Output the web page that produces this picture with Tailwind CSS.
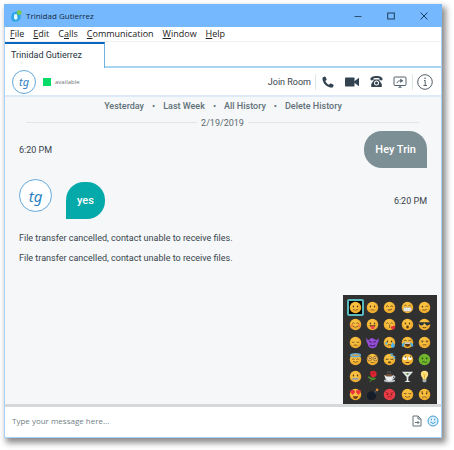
<!DOCTYPE html>
<html lang="en">
<head>
<meta charset="utf-8">
<meta name="viewport" content="width=device-width, initial-scale=1">
<title>Trinidad Gutierrez</title>
<script src="https://cdn.jsdelivr.net/npm/@tailwindcss/browser@4"></script>
</head>
<body class="flex min-h-screen bg-white pt-1 pr-3 pb-3 pl-1 font-[Roboto,sans-serif] text-[9px] leading-3 text-[#38444b]">

<svg class="hidden" aria-hidden="true">
  <defs>
    <symbol id="face" viewBox="0 0 14 14"><circle cx="7" cy="7" r="6.2" fill="#f0ae30"/><circle cx="6.5" cy="6" r="4.6" fill="#f8c040"/></symbol>
    <symbol id="eyes" viewBox="0 0 14 14"><ellipse cx="4.8" cy="5.9" rx=".8" ry="1" fill="#5b3a14"/><ellipse cx="9.2" cy="5.9" rx=".8" ry="1" fill="#5b3a14"/></symbol>
    <symbol id="smile" viewBox="0 0 14 14"><path d="M4.300 9Q7 11 9.700 9" fill="none" stroke="#6b461a" stroke-width=".8"/></symbol>
  </defs>
</svg>

<main class="flex min-w-0 flex-1 flex-col border border-[#a9d2fb] bg-white shadow-[3px_4px_6px_1px_rgba(0,0,0,0.45)]">
  <header class="-mx-px -mt-px flex h-[23px] items-center bg-[#75b8fd] pr-0.5 font-['Open_Sans',sans-serif] text-[8px] text-[#14283c]">
    <svg class="ml-1.5 size-3" viewBox="0 0 12 12" aria-hidden="true"><path d="M2 3.5L6 1.5L10.5 4V9L7 11.5H3L1 8.5Z" fill="#28a5e5"/><path d="M4.3 4.2H7L7.6 8.2L6 10L3.8 8.5Z" fill="#e5f7ff"/><circle cx="9.2" cy="2.6" r="2.4" fill="#7bc94c"/></svg>
    <h1 class="ml-1 flex-1">Trinidad Gutierrez</h1>
    <button class="flex h-full w-[33px] items-center justify-center" aria-label="Minimize"><svg class="size-2" viewBox="0 0 8 8"><path d="M.5 4.5H7.5" stroke="#2f506f"/></svg></button>
    <button class="flex h-full w-[33px] items-center justify-center" aria-label="Maximize"><svg class="size-2" viewBox="0 0 8 8"><rect x=".7" y="1" width="6.6" height="6" fill="none" stroke="#1f3c58"/></svg></button>
    <button class="flex h-full w-[33px] items-center justify-center" aria-label="Close"><svg class="size-2" viewBox="0 0 8 8"><path d="M.5.5L7.5 7.5M7.5.5L.5 7.5" stroke="#1f3c58"/></svg></button>
  </header>

  <nav class="flex h-[15px] items-center gap-[9px] border-b border-[#f0f0f0] pl-[5px] font-['Open_Sans',sans-serif] text-[9px] text-[#222]" aria-label="Menu">
    <button><u>F</u>ile</button>
    <button><u>E</u>dit</button>
    <button>C<u>a</u>lls</button>
    <button><u>C</u>ommunication</button>
    <button><u>W</u>indow</button>
    <button><u>H</u>elp</button>
  </nav>

  <div class="flex h-[26px]">
    <button class="w-[100px] border-t-2 border-r border-t-[#0a66be] border-r-[#71b1df] pb-0.5 pl-1.5 text-left text-[#26323a]">Trinidad Gutierrez</button>
    <div class="flex-1 border-b-2 border-[#a9d5f2]"></div>
  </div>

  <section class="flex h-[29px] items-center border-b-2 border-[#dcebf7] pr-1 pl-[7px]">
    <div class="flex size-6 items-center justify-center rounded-full border border-[#63a9da] font-['Noto_Sans',sans-serif] text-[11px] text-[#2d82c2] italic">tg</div>
    <span class="ml-[7px] size-2 bg-[#08dc68]"></span>
    <span class="ml-1 flex-1 font-['Open_Sans',sans-serif] text-[6px] text-[#6c757a]">available</span>
    <button class="mr-1">Join Room</button>
    <div class="flex h-4 items-center border-x border-[#dde7ea]">
      <button class="flex w-6 justify-center" aria-label="Call"><svg class="size-3" viewBox="0 0 24 24" fill="#33434f"><path d="M1 3.5L5 1C6 .6 6.7 1 7.2 2L9 6.2C9.4 7.2 9.2 7.8 8.4 8.5L6.5 10C8.2 13.5 10.7 16 14.2 17.7L15.8 15.6C16.5 14.8 17.1 14.6 18 15L22.2 16.9C23.1 17.3 23.4 18 23.2 18.8L22 22C21.7 22.8 21.1 23.2 20.2 23.2C9.5 22.8 1.2 14.3 .8 4.3Z"/></svg></button>
      <button class="flex w-6 justify-center" aria-label="Video call"><svg class="h-3 w-[14px]" viewBox="0 0 28 24" fill="#33434f"><rect y="3" width="19" height="18" rx="1.5"/><path d="M18 11L28 3.500V20.500L18 13Z"/></svg></button>
      <button class="flex w-6 justify-center" aria-label="Telephone"><svg class="size-[13px]" viewBox="0 0 26 26" fill="#33434f"><path d="M1 9C0 4.5 6 2 13 2S26 4.500 25 9L24 11L19 10V7C16 5.800 10 5.800 7 7V10L2 11Z"/><path d="M8.500 9H17.500L20 13L23.500 18V24H2.500V18L6 13Z"/><circle cx="13" cy="16" r="5" fill="#fff"/><circle cx="13" cy="16" r="3"/></svg></button>
      <button class="flex w-6 justify-center" aria-label="Share screen"><svg class="size-[14px]" viewBox="0 0 28 28" fill="none" stroke="#53636e" stroke-width="2"><rect x="2" y="4" width="24" height="17" rx="2"/><path d="M8 16C9 12.500 12 11.500 16 11.500"/><path d="M15 8L20 11.500L15 15ZM11 25H17L14 22Z" fill="#53636e" stroke-width="1"/></svg></button>
    </div>
    <button class="flex w-6 justify-center" aria-label="Information"><svg class="size-4" viewBox="0 0 16 16" fill="none" stroke="#53626b"><circle cx="8" cy="8" r="7.300"/><path d="M7 6.500H8.200V11.500M6.500 11.500H10"/><circle cx="8" cy="4.200" r=".8" fill="#53626b" stroke="none"/></svg></button>
  </section>

  <section class="relative flex-1 bg-[#f5f7f9] px-3.5">
    <div class="flex h-[17px] items-center justify-center gap-2 font-medium text-[#627178]">
      <button>Yesterday</button><span>•</span><button>Last Week</button><span>•</span><button>All History</button><span>•</span><button>Delete History</button>
    </div>
    <div class="flex h-[17px] items-center gap-1 pr-2 pl-[7px] text-[#5e6a70]">
      <hr class="flex-1 border-[#e3e6e9]"><time>2/19/2019</time><hr class="flex-1 border-[#e3e6e9]">
    </div>
    <div class="flex items-center justify-between">
      <time>6:20 PM</time>
      <p class="flex h-[37px] items-center rounded-[18px] rounded-br-none bg-[#7c8f94] px-[11px] text-[11px] font-medium text-white">Hey Trin</p>
    </div>
    <div class="mt-[11px] flex h-10">
      <div class="flex size-[33px] items-center justify-center rounded-full border border-[#63a9da] bg-white font-['Noto_Sans',sans-serif] text-[15px] text-[#2d82c2] italic">tg</div>
      <p class="ml-3.5 flex h-[37px] items-center self-end rounded-[18px] rounded-bl-none bg-[#03aaa9] px-[11px] text-[11px] font-medium text-white">yes</p>
      <time class="mt-1 ml-auto self-center">6:20 PM</time>
    </div>
    <p class="mt-[13px]">File transfer cancelled, contact unable to receive files.</p>
    <p class="mt-2">File transfer cancelled, contact unable to receive files.</p>

    <div class="absolute right-1 -bottom-px grid h-[110px] w-[94px] grid-cols-5 grid-rows-6 place-items-center bg-[#303030] px-1 pt-1 pb-0.5" aria-label="Emoji">
      <button class="flex size-[17px] items-center justify-center rounded-[2px] border-2 border-[#59b9bd] bg-black" aria-label="Smile"><svg class="size-[13px]" viewBox="0 0 14 14"><use href="#face"/><use href="#eyes"/><use href="#smile"/></svg></button>
      <button aria-label="Frown"><svg class="size-[13px]" viewBox="0 0 14 14"><use href="#face"/><use href="#eyes"/><path d="M4.800 9.800Q7 9 9.200 9.800" fill="none" stroke="#6b461a" stroke-width=".8"/></svg></button>
      <button aria-label="Smirk"><svg class="size-[13px]" viewBox="0 0 14 14"><use href="#face"/><path d="M3.500 6Q5 4.500 6 6M8 6Q9.500 4.500 10.500 6M5 9.500Q8 10.500 9.800 8.300" fill="none" stroke="#5b3a14"/></svg></button>
      <button aria-label="Grin"><svg class="size-[13px]" viewBox="0 0 14 14"><use href="#face"/><path d="M3.500 5.200Q5 4 6 5.200M8 5.200Q9.500 4 10.500 5.200" fill="none" stroke="#5b3a14" stroke-width=".8"/><rect x="2.600" y="7" width="8.800" height="4" rx="2" fill="#fff" stroke="#8b8b75" stroke-width=".5"/><path d="M3 9H11M5 7V11M7 7V11M9 7V11" stroke="#b9bbb9" stroke-width=".4"/></svg></button>
      <button aria-label="Wink"><svg class="size-[13px]" viewBox="0 0 14 14"><use href="#face"/><circle cx="4.800" cy="6" r=".9" fill="#5b3a14"/><path d="M8 6Q9.500 5 10.700 6M4.500 9.500Q7.500 10.500 9.500 8.800" fill="none" stroke="#5b3a14" stroke-width=".8"/></svg></button>

      <button aria-label="Blush"><svg class="size-[13px]" viewBox="0 0 14 14"><use href="#face"/><path d="M3.500 6Q5 4.500 6 6M8 6Q9.500 4.500 10.500 6" fill="none" stroke="#5b3a14" stroke-width=".8"/><circle cx="3.200" cy="8.300" r="1.500" fill="#f77b45"/><circle cx="10.800" cy="8.300" r="1.500" fill="#f77b45"/><use href="#smile"/></svg></button>
      <button aria-label="Tongue out"><svg class="size-[13px]" viewBox="0 0 14 14"><use href="#face"/><use href="#eyes"/><path d="M3.500 7.800H10.500Q10 10 7 10T3.500 7.800Z" fill="#5b3a14"/><path d="M5.300 8.500H9V11Q7.200 13.500 5.300 11Z" fill="#f14552"/></svg></button>
      <button aria-label="Kiss"><svg class="size-[13px]" viewBox="0 0 14 14"><use href="#face"/><path d="M3.500 6Q5 4.500 6 6M8 6Q9.500 4.500 10.500 6M6.500 7.500Q8.500 8 6.800 8.900Q8.500 9.500 6.500 10.500" fill="none" stroke="#5b3a14" stroke-width=".8"/><path d="M10.800 13L8.300 10.500Q8.300 8.700 10.300 9Q12.300 7.600 13.300 9.500Q13.500 11.500 10.800 13Z" fill="#e52e35"/></svg></button>
      <button aria-label="Surprised"><svg class="size-[13px]" viewBox="0 0 14 14"><use href="#face"/><use href="#eyes"/><ellipse cx="7" cy="9.600" rx="1.400" ry="1.600" fill="#5b3a14"/></svg></button>
      <button aria-label="Sunglasses"><svg class="size-[13px]" viewBox="0 0 14 14"><use href="#face"/><path d="M.8 4.500H13.200V6Q12 8.500 9.500 8Q8 7.600 7.600 5.800H6.400Q6 7.600 4.500 8Q2 8.500.8 6Z" fill="#26303c"/><path d="M5 10Q7 11 9 9.800" fill="none" stroke="#5b3a14"/></svg></button>

      <button aria-label="Pensive"><svg class="size-[13px]" viewBox="0 0 14 14"><use href="#face"/><path d="M3 6.500Q4.500 7.500 6 6.500M8 6.500Q9.500 7.500 11 6.500M5 10Q7 9.200 9 10" fill="none" stroke="#76501a" stroke-width=".9"/></svg></button>
      <button aria-label="Devil"><svg class="size-[13px]" viewBox="0 0 14 14"><path d="M.8 1Q.5 4 3 4.500Q5 2 7 2.300T11 4.500Q13.500 4 13.200 1Q14.500 6 12.300 8Q11.500 13 7 13.200Q2.500 13 1.700 8Q-.5 6 .8 1Z" fill="#944fd2"/><path d="M3.500 5.500L6 7M10.500 5.500L8 7M4 9.500Q7 12 10 9.500" fill="none" stroke="#411c6e" stroke-width="1.100"/></svg></button>
      <button aria-label="Crying"><svg class="size-[13px]" viewBox="0 0 14 14"><use href="#face"/><use href="#eyes"/><path d="M5 10Q7 8.500 9 10" fill="none" stroke="#5b3a14"/><path d="M10.500 6.500Q13.200 10 12.500 11.500Q10.500 14 8.800 11.500Q8.500 9.500 10.500 6.500Z" fill="#4ab6ec"/><ellipse cx="3.600" cy="8" rx="1" ry="1.500" fill="#4ab6ec"/></svg></button>
      <button aria-label="Tears of joy"><svg class="size-[13px]" viewBox="0 0 14 14"><use href="#face"/><path d="M3 5.200Q4.500 3.800 6 5.200M8 5.200Q9.500 3.800 11 5.200" fill="none" stroke="#5b3a14" stroke-width=".8"/><path d="M4 7H10Q10 11.500 7 11.500T4 7Z" fill="#5b3a14"/><path d="M4.300 7H9.700V8.300H4.300Z" fill="#fff"/><path d="M3.800 6.500Q4 11.500 1.500 11.500Q-1 9.500 3.800 6.500ZM10.200 6.500Q10 11.500 12.500 11.500Q15 9.500 10.200 6.500Z" fill="#43afe9"/></svg></button>
      <button aria-label="Unamused"><svg class="size-[13px]" viewBox="0 0 14 14"><use href="#face"/><path d="M3 5.500H6M8 5.500H11M5 9.500H9" stroke="#5b3a14" stroke-width=".8"/><path d="M4 6.300H5.500M9 6.300H10.500" stroke="#5b3a14"/></svg></button>

      <button aria-label="Angel"><svg class="size-[13px]" viewBox="0 0 14 14"><use href="#face"/><ellipse cx="7" cy="2.300" rx="5.300" ry="1.600" fill="#d6a044" stroke="#55aee8" stroke-width="1.400"/><path d="M3.500 7Q5 5.500 6 7M8 7Q9.500 5.500 10.500 7" fill="none" stroke="#5b3a14" stroke-width=".8"/><use href="#smile"/></svg></button>
      <button aria-label="Nerd"><svg class="size-[13px]" viewBox="0 0 14 14"><use href="#face"/><g fill="#edc068" stroke="#96702f" stroke-width=".9"><circle cx="4" cy="6" r="2.500"/><circle cx="10" cy="6" r="2.500"/></g><circle cx="4.200" cy="6" r=".8" fill="#5b3a14"/><circle cx="9.800" cy="6" r=".8" fill="#5b3a14"/><path d="M5 10.200H9" stroke="#8b6128" stroke-width=".9"/></svg></button>
      <button aria-label="Sleeping"><svg class="size-[13px]" viewBox="0 0 14 14"><use href="#face"/><path d="M3 6.500Q4.500 7.500 6 6.500M8 6.500Q9.500 7.500 11 6.500" fill="none" stroke="#5b3a14"/><ellipse cx="7" cy="10" rx="1.800" ry="1.200" fill="#76501a"/><path d="M8 .8H10.500L8.500 3H11M11 3.800H13L11.300 5.800H13.300" fill="none" stroke="#4baeea"/></svg></button>
      <button aria-label="Eye roll"><svg class="size-[13px]" viewBox="0 0 14 14"><use href="#face"/><circle cx="4.300" cy="5.600" r="2" fill="#fff"/><circle cx="9.700" cy="5.600" r="2" fill="#fff"/><circle cx="4.700" cy="4.400" r=".8" fill="#5b3a14"/><circle cx="10.100" cy="4.400" r=".8" fill="#5b3a14"/><path d="M5 10.200H9" stroke="#5b3a14"/></svg></button>
      <button aria-label="Sick"><svg class="size-[13px]" viewBox="0 0 14 14"><circle cx="7" cy="7" r="6.200" fill="#70b52d"/><circle cx="4.700" cy="5.800" r=".9" fill="#31520e"/><circle cx="9.300" cy="5.800" r=".9" fill="#31520e"/><path d="M4.500 10Q6 8.500 7 9.700T9.500 9.500" fill="none" stroke="#31520e"/></svg></button>

      <button aria-label="Zipped mouth"><svg class="size-[13px]" viewBox="0 0 14 14"><use href="#face"/><use href="#eyes"/><path d="M3.500 9.500H10.500" stroke="#a6afb4" stroke-width="2"/><path d="M4 9.500H10" stroke="#5a6064" stroke-width=".7" stroke-dasharray="1 1"/></svg></button>
      <button aria-label="Rose"><svg class="size-[13px]" viewBox="0 0 14 14"><path d="M8 6Q7 10 4 13M6.300 10Q3 9.500 2.300 7.500Q5.500 7 6.500 9.500M6 10.500Q9 11 10.500 9Q8 8 6.500 10" fill="#4f8b2d" stroke="#4f8b2d" stroke-width="1"/><path d="M4.500 1.500L8 .8L11 2L11.500 5Q10.500 8 7.500 7.800Q4.300 7.500 4.500 1.500Z" fill="#e02430"/><path d="M6 3Q8 5 10 2.500" fill="none" stroke="#951625" stroke-width=".7"/></svg></button>
      <button aria-label="Coffee"><svg class="size-[13px]" viewBox="0 0 14 14"><ellipse cx="7" cy="11.500" rx="6" ry="1.600" fill="#b8bec1"/><path d="M1.500 5.500H11.500Q11.500 11.500 7 12Q2 11.500 1.500 5.500Z" fill="#edf0f2"/><ellipse cx="6.500" cy="5.600" rx="4.300" ry="1.300" fill="#77533b"/><path d="M11 6.500Q14 6.500 12.500 8.500L10.500 9.500" fill="none" stroke="#cfd5d8"/><path d="M5.500 3.500Q4.500 2.500 5.500 1.500M8 3.500Q7 2.500 8 1.500" fill="none" stroke="#8b9296" stroke-width=".7"/></svg></button>
      <button aria-label="Cocktail"><svg class="size-[13px]" viewBox="0 0 14 14"><path d="M1 2H13L7.900 7.500V11.500L10.500 13H3.500L6.100 11.500V7.500Z" fill="#e6eef0"/><path d="M3.800 3.200H10.200L7 6Z" fill="#b3bfae"/><circle cx="7" cy="4.200" r="1" fill="#668e30"/></svg></button>
      <button aria-label="Light bulb"><svg class="size-[13px]" viewBox="0 0 14 14"><path d="M7 .8Q11 1 11 4.700Q10.800 6.800 9 9V10.500H5V9Q3.200 6.800 3 4.700Q3 1 7 .8Z" fill="#ffe180"/><path d="M5.500 4L7 5.500L8.500 4M7 5.500V9" fill="none" stroke="#edae34"/><path d="M5 10.500H9V12L8 13.300H6L5 12Z" fill="#a8b2b8"/></svg></button>

      <button aria-label="Heart eyes"><svg class="size-[13px]" viewBox="0 0 14 14"><use href="#face"/><path d="M4 7.500L1.300 4.500Q1 1.500 3.500 2.500Q6.500 1.500 6.500 4.500ZM10 7.500L7.500 4.500Q7.500 1.500 10.500 2.500Q13 1.500 12.700 4.500Z" fill="#ed343a"/><path d="M4 9H10Q9 12 7 12T4 9Z" fill="#713819"/></svg></button>
      <button aria-label="Bomb"><svg class="size-[13px]" viewBox="0 0 14 14"><circle cx="6" cy="8.300" r="4.900" fill="#151d29"/><path d="M8.200 4.500L9.500 3L11.500 4.700L10 6.500Z" fill="#30414f"/><path d="M10.500 3.800Q11 2 12 2" fill="none" stroke="#b59b73"/><circle cx="12" cy="2" r="1.400" fill="#e28732"/></svg></button>
      <button aria-label="Angry"><svg class="size-[13px]" viewBox="0 0 14 14"><circle cx="7" cy="7" r="6.200" fill="#e93c44"/><path d="M3 4.500L6 6M11 4.500L8 6M4.500 10Q7 8 9.500 10" fill="none" stroke="#8a2029" stroke-width=".8"/><circle cx="4.800" cy="6.900" r=".8" fill="#6c1921"/><circle cx="9.200" cy="6.900" r=".8" fill="#6c1921"/></svg></button>
      <button aria-label="Relieved"><svg class="size-[13px]" viewBox="0 0 14 14"><use href="#face"/><path d="M3 5.800Q4.500 7 6 5.800M8 5.800Q9.500 7 11 5.800" fill="none" stroke="#5b3a14" stroke-width=".9"/><use href="#smile"/></svg></button>
      <button aria-label="Worried"><svg class="size-[13px]" viewBox="0 0 14 14"><use href="#face"/><use href="#eyes"/><path d="M3.300 4.500L5.500 4M10.700 4.500L8.500 4M4.500 10Q7 8.800 9.500 10" fill="none" stroke="#6b461a" stroke-width=".8"/></svg></button>
    </div>
  </section>

  <form class="relative flex h-[33px] items-center border-t-3 border-[#d5d9da] pb-0.5 pl-[7px]">
    <input class="min-w-0 flex-1 font-['Open_Sans',sans-serif] text-[8px] outline-none placeholder:text-[#718087]" type="text" aria-label="Message" placeholder="Type your message here...">
    <button type="button" class="flex w-4 justify-center" aria-label="Attach file"><svg class="size-3" viewBox="0 0 12 12" fill="none" stroke="#65727a"><path d="M2 1H7L10 4V11H2ZM7 1V4H10M4 7.500H8M6.500 6L8 7.500L6.500 9"/></svg></button>
    <button type="button" class="flex w-4 justify-center" aria-label="Insert emoji"><svg class="size-3" viewBox="0 0 12 12" fill="none" stroke="#3b9cd9"><circle cx="6" cy="6" r="5" fill="#e3f2fb"/><path d="M4.300 3.500V5.500M7.700 3.500V5.500M3.500 7Q6 10 8.500 7"/></svg></button>
  </form>
</main>
</body>
</html>
